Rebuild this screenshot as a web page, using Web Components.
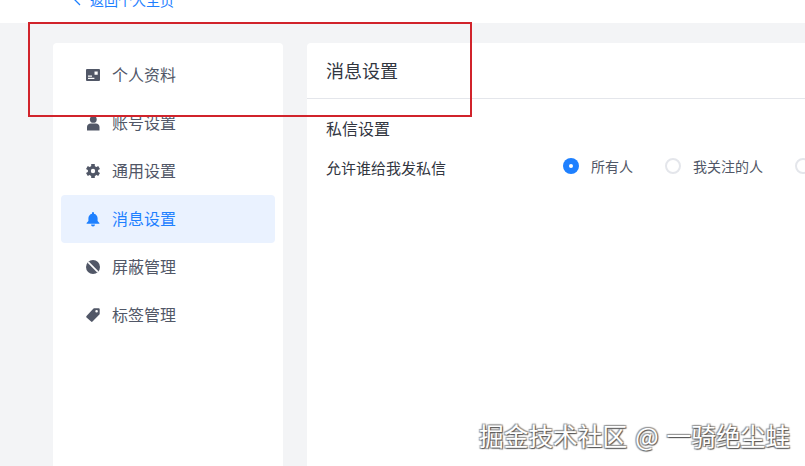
<!DOCTYPE html>
<html lang="zh">
<head>
<meta charset="utf-8">
<style>
  html, body { margin: 0; height: 100%; }
  body {
    width: 805px; height: 466px; overflow: hidden; position: relative;
    background: #f3f4f6;
    font-family: "Noto Sans CJK SC", "Noto Sans", sans-serif;
    color: #515767;
  }
</style>
</head>
<body>
<top-bar>返回个人主页</top-bar>
<settings-page>
  <side-menu slot="side">
    <menu-item icon="card">个人资料</menu-item>
    <menu-item icon="user">账号设置</menu-item>
    <menu-item icon="gear">通用设置</menu-item>
    <menu-item icon="bell" active>消息设置</menu-item>
    <menu-item icon="ban">屏蔽管理</menu-item>
    <menu-item icon="tag">标签管理</menu-item>
  </side-menu>
  <message-panel slot="main"></message-panel>
</settings-page>
<red-mark></red-mark>
<water-mark>掘金技术社区 @ 一骑绝尘蛙</water-mark>

<script>
const ICONS = {
  card: '<path fill-rule="evenodd" d="M1 1h12a1 1 0 0 1 1 1v10a1 1 0 0 1-1 1H1a1 1 0 0 1-1-1V2a1 1 0 0 1 1-1zm7.500 2.400v3.400h3.200V3.400zM2 7.400v1.300h4V7.400zm0 2.400v1.200h6.400V9.800z"/>',
  user: '<circle cx="7.300" cy="3.400" r="3.400"/><path d="M1 14.500v-3.600C1 8.600 2.800 7.400 4.600 7.400h5.400c1.800 0 3.500 1.200 3.500 3.500v3.600z"/>',
  gear: '<g stroke="currentColor" stroke-width="3.600"><path d="M7 0v14"/><path d="M.9 3.500l12.200 7"/><path d="M.9 10.500l12.200-7"/></g><circle cx="7" cy="7" r="5.200"/><circle cx="7" cy="7" r="2.200" fill="#fff"/>',
  bell: '<path d="M7 0a1 1 0 0 1 1 1v.7c2.200.5 3.600 2.300 3.600 4.600v2.600L13.400 11v.8H.6V11l1.800-2.100V6.300c0-2.300 1.400-4.100 3.600-4.600V1a1 1 0 0 1 1-1z"/><path d="M5 12.600h4a2 2 0 0 1-4 0z"/>',
  ban: '<circle cx="7" cy="7" r="7"/><path d="M2.200 2.200l9.600 9.600" stroke="#fff" stroke-width="1.700"/>',
  tag: '<path fill-rule="evenodd" d="M8.200.3h4.500a1 1 0 0 1 1 1v4.500a1 1 0 0 1-.3.7l-6.900 7.100a1 1 0 0 1-1.400 0L.5 9.400a1 1 0 0 1 0-1.400L7.500.6a1 1 0 0 1 .7-.3zm2.400 1.600a1.300 1.300 0 1 0 0 2.600 1.300 1.300 0 0 0 0-2.600z"/>'
}

class TopBar extends HTMLElement {
  constructor() {
    super()
    this.attachShadow({ mode: 'open' })
    this.shadowRoot.innerHTML = `
      <style>
        :host { display: block; height: 23px; background: #fff; overflow: hidden; }
        a { display: flex; align-items: center; gap: 8px; margin: -11px 0 0 73px; height: 22px;
            color: #1e80ff; font-size: 14px; line-height: 22px; text-decoration: none; }
        svg { width: 9px; height: 12px; }
      </style>
      <a href="#">
        <svg viewBox="0 0 9 12" fill="none" stroke="#1e80ff" stroke-width="1.3"><path d="M7 1 2 6l5 5"/></svg>
        <span><slot></slot></span>
      </a>`
  }
}

class SettingsPage extends HTMLElement {
  constructor() {
    super()
    this.attachShadow({ mode: 'open' })
    this.shadowRoot.innerHTML = `
      <style>
        :host { display: flex; gap: 24px; padding: 20px 0 0 53px; height: 443px; box-sizing: border-box; }
        ::slotted([slot=side]) { flex: 0 0 230px; }
        ::slotted([slot=main]) { flex: 1; min-width: 0; }
      </style>
      <slot name="side"></slot>
      <slot name="main"></slot>`
  }
}

class SideMenu extends HTMLElement {
  constructor() {
    super()
    this.attachShadow({ mode: 'open' })
    this.shadowRoot.innerHTML = `
      <style>
        :host { display: block; background: #fff; border-radius: 4px 4px 0 0; padding: 8px; box-sizing: border-box; }
      </style>
      <slot></slot>`
  }
}

class MenuItem extends HTMLElement {
  constructor() {
    super()
    this.attachShadow({ mode: 'open' })
  }
  connectedCallback() {
    const icon = ICONS[this.getAttribute('icon')] ?? ''
    this.shadowRoot.innerHTML = `
      <style>
        :host { display: flex; align-items: center; gap: 12px; height: 48px; padding-left: 25px;
                border-radius: 4px; color: #515767; font-size: 16px; }
        :host([active]) { background: #eaf2ff; color: #1e80ff; }
        svg { width: 14px; height: 14px; fill: currentColor; flex: none; overflow: visible; }
        span { line-height: 24px; margin-top: -2px; }
      </style>
      <svg viewBox="0 0 14 14">${icon}</svg>
      <span><slot></slot></span>`
  }
}

class RadioOption extends HTMLElement {
  constructor() {
    super()
    this.attachShadow({ mode: 'open' })
    this.shadowRoot.innerHTML = `
      <style>
        :host { display: flex; align-items: center; gap: 12px; font-size: 14px; color: #515767; flex: none; }
        i { width: 16px; height: 16px; border-radius: 50%; box-sizing: border-box; border: 2px solid #e4e6eb;
            background: #fff; flex: none; }
        :host([checked]) i { background: #1e80ff; border: 0; position: relative; }
        :host([checked]) i::after { content: ""; position: absolute; left: 6px; top: 6px; width: 4px; height: 4px;
            border-radius: 50%; background: #fff; }
      </style>
      <i></i><span><slot></slot></span>`
  }
}

class MessagePanel extends HTMLElement {
  constructor() {
    super()
    this.attachShadow({ mode: 'open' })
    this.shadowRoot.innerHTML = `
      <style>
        :host { display: block; background: #fff; border-radius: 4px 0 0 0; overflow: hidden; }
        header { height: 55px; line-height: 55px; padding-left: 19px; font-size: 18px; color: #32363f;
                 border-bottom: 1px solid #e4e6eb; }
        section { padding: 17px 0 0 19px; }
        h2 { margin: 0; font-size: 16px; font-weight: 400; line-height: 24px; color: #32363f; }
        .row { display: flex; align-items: center; margin-top: 14px; height: 24px; }
        .row > label { flex: 0 0 237px; font-size: 15px; color: #32363f; position: relative; top: 1px; }
        .opts { display: flex; gap: 32px; }
      </style>
      <header>消息设置</header>
      <section>
        <h2>私信设置</h2>
        <div class="row">
          <label>允许谁给我发私信</label>
          <div class="opts">
            <radio-option checked>所有人</radio-option>
            <radio-option>我关注的人</radio-option>
            <radio-option></radio-option>
          </div>
        </div>
      </section>`
  }
}

class RedMark extends HTMLElement {
  constructor() {
    super()
    this.attachShadow({ mode: 'open' })
    this.shadowRoot.innerHTML = `
      <style>
        :host { position: absolute; left: 28px; top: 22px; width: 444px; height: 95px; box-sizing: border-box;
                border: 2px solid #d1232b; pointer-events: none; }
      </style>`
  }
}

class WaterMark extends HTMLElement {
  constructor() {
    super()
    this.attachShadow({ mode: 'open' })
    this.shadowRoot.innerHTML = `
      <style>
        :host { position: absolute; left: 479px; top: 417px; font-size: 24.7px; line-height: 36px; white-space: nowrap;
                word-spacing: 2.5px; color: #fff;
                text-shadow: 1px 1px 1px #555, -1px -1px 1px #999, 1px -1px 1px #999, -1px 1px 1px #999; }
      </style>
      <slot></slot>`
  }
}

customElements.define('top-bar', TopBar)
customElements.define('settings-page', SettingsPage)
customElements.define('side-menu', SideMenu)
customElements.define('menu-item', MenuItem)
customElements.define('radio-option', RadioOption)
customElements.define('message-panel', MessagePanel)
customElements.define('red-mark', RedMark)
customElements.define('water-mark', WaterMark)
</script>
</body>
</html>
